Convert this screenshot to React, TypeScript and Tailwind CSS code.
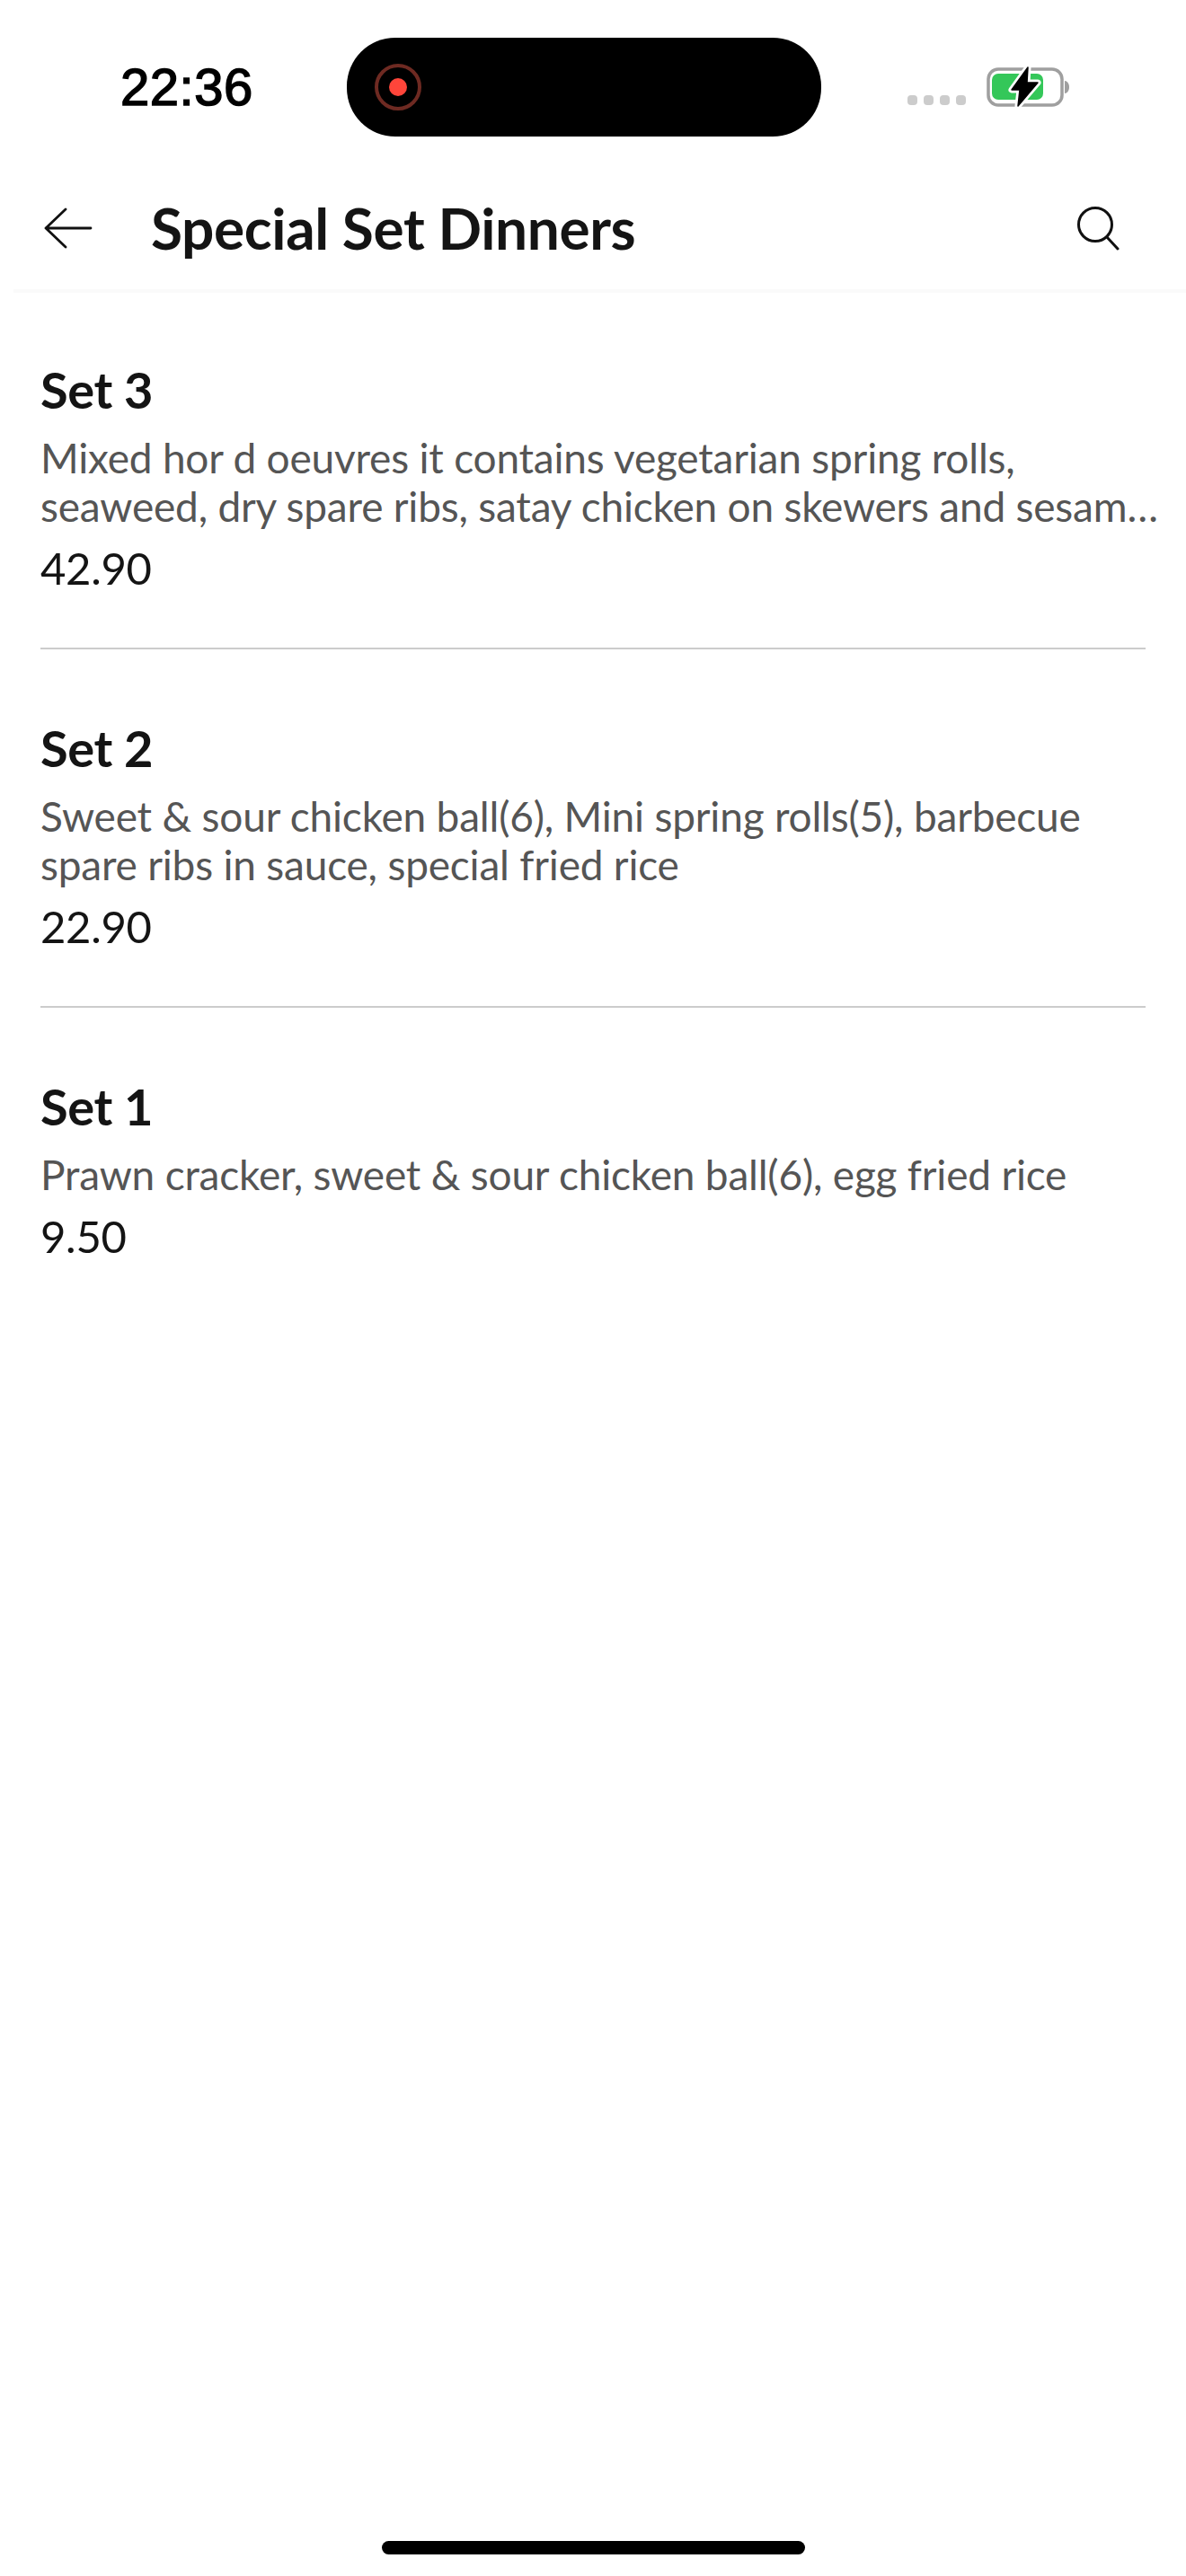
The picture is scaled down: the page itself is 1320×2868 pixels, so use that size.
const items = [
  {
    name: "Set 3",
    desc: "Mixed hor d oeuvres it contains vegetarian spring rolls, seaweed, dry spare ribs, satay chicken on skewers and sesame prawn toast with sweet chilli sauce and more",
    price: "42.90",
  },
  {
    name: "Set 2",
    desc: "Sweet & sour chicken ball(6), Mini spring rolls(5), barbecue spare ribs in sauce, special fried rice",
    price: "22.90",
  },
  {
    name: "Set 1",
    desc: "Prawn cracker, sweet & sour chicken ball(6), egg fried rice",
    price: "9.50",
  },
];

function Battery() {
  return (
    <svg width="96" height="50" viewBox="0 0 96 50" className="block">
      <rect x="2" y="5" width="82" height="40" rx="11" fill="none" stroke="#9f9f9f" strokeWidth="3.5" />
      <rect x="6" y="10" width="57" height="29" rx="7" fill="#34c759" />
      <path d="M87 18c3.500 .6 5 3.500 5 7s-1.500 6.400-5 7z" fill="#9f9f9f" />
      <path d="M46 3 28 28h9l-2 18 22-26H45z" fill="#ffffff" stroke="#ffffff" strokeWidth="7" strokeLinejoin="round" />
      <path d="M46 3 28 28h9l-2 18 22-26H45z" fill="#000000" stroke="#000000" strokeWidth="1.500" strokeLinejoin="round" />
    </svg>
  );
}

export default function App() {
  return (
    <div className="flex min-h-[2868px] w-[1320px] flex-col bg-white font-['Lato','Noto_Sans',sans-serif]">
      <div className="flex h-[190px] items-start pt-[42px]">
        <div className="mt-[22px] w-[386px] pl-[134px] font-['Liberation_Sans',sans-serif] text-[58px] leading-[66px] font-normal tracking-[0.5px] text-black [-webkit-text-stroke:1.5px_black]">
          22:36
        </div>
        <div className="flex h-[110px] w-[528px] items-center rounded-[54px] bg-black pl-[31px]">
          <div className="flex h-[52px] w-[52px] items-center justify-center rounded-full border-[4px] border-[#6e2a22]">
            <div className="h-[20px] w-[20px] rounded-full bg-[#ff453a]" />
          </div>
        </div>
        <div className="ml-[96px] flex items-start">
          <div className="mt-[64px] flex gap-[7px]">
            <div className="h-[11px] w-[11px] rounded-[4px] bg-[#cccccc]" />
            <div className="h-[11px] w-[11px] rounded-[4px] bg-[#cccccc]" />
            <div className="h-[11px] w-[11px] rounded-[4px] bg-[#cccccc]" />
            <div className="h-[11px] w-[11px] rounded-[4px] bg-[#cccccc]" />
          </div>
          <div className="mt-[30px] ml-[23px]">
            <Battery />
          </div>
        </div>
      </div>

      <div className="ml-[15px] flex h-[136px] items-center border-b-[4px] border-[#fafafa] pr-[72px] pb-[4px] pl-[34px]">
        <svg width="54" height="46" viewBox="0 0 54 46" className="block shrink-0">
          <path d="M52 23H2M24 2 2 23l22 21" fill="none" stroke="#111111" strokeWidth="2.800" strokeLinecap="round" strokeLinejoin="round" />
        </svg>
        <h1 className="ml-[65px] text-[64px] leading-[72px] font-bold tracking-[-0.4px] text-[#141414]">
          Special Set Dinners
        </h1>
        <svg width="50" height="50" viewBox="0 0 50 50" className="ml-auto block shrink-0">
          <circle cx="21" cy="21" r="18.500" fill="none" stroke="#111111" strokeWidth="3" />
          <path d="M34 35l12 13" fill="none" stroke="#111111" strokeWidth="3" strokeLinecap="round" />
        </svg>
      </div>

      <div className="flex flex-col px-[45px] pt-[75px]">
        {items.map((item, index) => (
          <div key={item.name} className={index < 2 ? "mb-[77px] border-b-2 border-[#cccccc] pb-[59px]" : ""}>
            <h2 className="text-[56px] leading-[66px] font-bold tracking-[-0.4px] text-[#141414]">{item.name}</h2>
            <p className="mt-[16px] line-clamp-2 w-[1265px] text-[46px] leading-[54px] tracking-[-0.2px] text-[#555555]">
              {item.desc}
            </p>
            <p className="mt-[11px] text-[49px] leading-[60px] tracking-[-0.3px] text-[#141414]">{item.price}</p>
          </div>
        ))}
      </div>

      <div className="mt-auto mb-[24px] h-[15px] w-[471px] self-center rounded-[8px] bg-black" />
    </div>
  );
}
